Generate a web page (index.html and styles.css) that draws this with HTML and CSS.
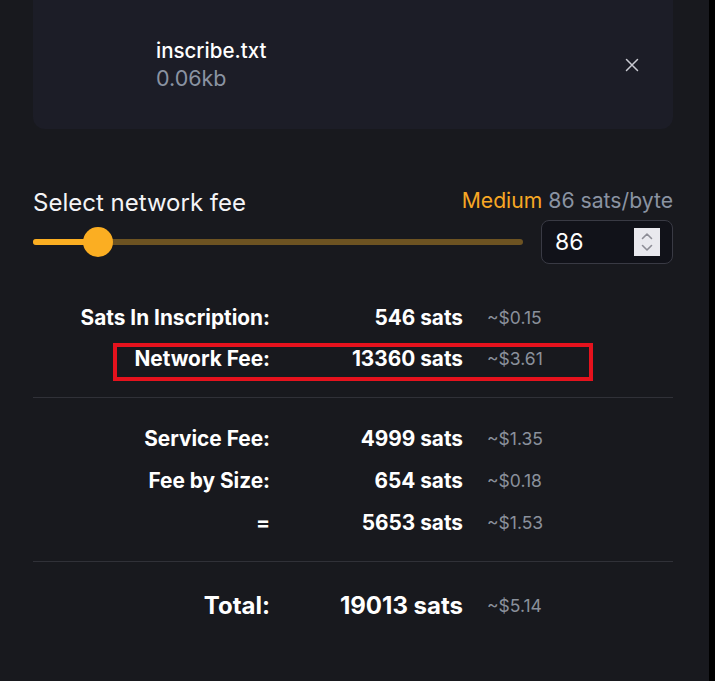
FILE: index.html
```html
<!DOCTYPE html>
<html lang="en">
<head>
<meta charset="utf-8">
<title>Inscribe</title>
<link rel="stylesheet" href="styles.css">
</head>
<body>
<div class="page">
  <main class="main">
    <section class="file-card">
      <div class="file-info">
        <div class="file-name">inscribe.txt</div>
        <div class="file-size">0.06kb</div>
      </div>
      <button class="close-btn" aria-label="Remove">
        <svg width="14" height="14" viewBox="0 0 14 14"><path d="M1.5 1.5 L12.5 12.5 M12.5 1.5 L1.5 12.5" stroke="#c9cad2" stroke-width="1.5" stroke-linecap="round" fill="none"/></svg>
      </button>
    </section>

    <section class="fee-select">
      <div class="fee-head">
        <span class="fee-title">Select network fee</span>
        <span class="fee-rate"><span class="fee-level">Medium</span> 86 sats/byte</span>
      </div>
      <div class="fee-controls">
        <div class="slider">
          <div class="slider-fill"></div>
          <div class="slider-thumb"></div>
        </div>
        <div class="num-input">
          <span class="num-value">86</span>
          <span class="spinner">
            <svg width="26" height="28" viewBox="0 0 26 28"><path d="M8.5 10.5 L13 6 L17.5 10.5" stroke="#8d8d96" stroke-width="1.6" fill="none" stroke-linecap="round" stroke-linejoin="round"/><path d="M8.5 17.5 L13 22 L17.5 17.5" stroke="#8d8d96" stroke-width="1.6" fill="none" stroke-linecap="round" stroke-linejoin="round"/></svg>
          </span>
        </div>
      </div>
    </section>

    <section class="summary">
      <div class="row">
        <span class="label">Sats In Inscription:</span>
        <span class="value">546 sats</span>
        <span class="usd">~$0.15</span>
      </div>
      <div class="row highlighted">
        <span class="label">Network Fee:</span>
        <span class="value">13360 sats</span>
        <span class="usd">~$3.61</span>
      </div>
    </section>

    <hr class="divider">

    <section class="summary group2">
      <div class="row">
        <span class="label">Service Fee:</span>
        <span class="value">4999 sats</span>
        <span class="usd">~$1.35</span>
      </div>
      <div class="row">
        <span class="label">Fee by Size:</span>
        <span class="value">654 sats</span>
        <span class="usd">~$0.18</span>
      </div>
      <div class="row">
        <span class="label">=</span>
        <span class="value">5653 sats</span>
        <span class="usd">~$1.53</span>
      </div>
    </section>

    <hr class="divider">

    <section class="summary total">
      <div class="row">
        <span class="label">Total:</span>
        <span class="value">19013 sats</span>
        <span class="usd">~$5.14</span>
      </div>
    </section>
  </main>
  <div class="edge"></div>
</div>
</body>
</html>
```

FILE: styles.css
```css
*, *::before, *::after { box-sizing: border-box; }

html, body {
  margin: 0;
  padding: 0;
  background: #18191e;
  height: 100%;
  overflow: hidden;
}

body {
  font-family: Inter, "Noto Sans", "Liberation Sans", sans-serif;
  color: #ffffff;
}

.page {
  display: flex;
  height: 681px;
}

.main {
  width: 709px;
  padding: 0 36px 0 33px;
  background: #18191e;
}

.edge {
  flex: 1;
  background: #000000;
}

/* File card */
.file-card {
  margin-top: -12px;
  height: 141px;
  background: #1c1d27;
  border-radius: 12px;
  display: flex;
  align-items: center;
  padding: 12px 34px 0 123px;
}

.file-info {
  flex: 1;
  display: flex;
  flex-direction: column;
}

.file-name {
  font-size: 20.5px;
  font-weight: 500;
  line-height: 27px;
  color: #ffffff;
}

.file-size {
  font-size: 21.5px;
  line-height: 28px;
  color: #8a93a2;
}

.close-btn {
  background: none;
  border: 0;
  padding: 0;
  width: 14px;
  height: 14px;
  display: flex;
}

/* Fee selector */
.fee-select {
  margin-top: 57px;
}

.fee-head {
  display: flex;
  justify-content: space-between;
  align-items: center;
  height: 32px;
}

.fee-title {
  font-size: 24px;
  color: #f4f4f6;
  margin-top: 1px;
}

.fee-rate {
  font-size: 21.2px;
  color: #8a93a2;
  margin-top: -4px;
}

.fee-level {
  color: #f7a724;
}

.fee-controls {
  margin-top: 2px;
  display: flex;
  align-items: center;
  gap: 18px;
}

.slider {
  flex: 1;
  height: 6px;
  border-radius: 3px;
  background: #6d5322;
  position: relative;
}

.slider-fill {
  width: 64px;
  height: 100%;
  border-radius: 3px;
  background: #fbae22;
}

.slider-thumb {
  position: absolute;
  left: 50px;
  top: -12px;
  width: 30px;
  height: 30px;
  border-radius: 50%;
  background: #fbae22;
}

.num-input {
  width: 132px;
  height: 44px;
  border: 1px solid #393a44;
  border-radius: 8px;
  background: #111219;
  display: flex;
  align-items: center;
  justify-content: space-between;
  padding: 0 12px 0 13px;
}

.num-value {
  font-size: 23px;
  color: #ffffff;
}

.spinner {
  display: flex;
  width: 26px;
  height: 28px;
  background: #e9e9ee;
}

/* Summary rows */
.summary {
  margin-top: 33px;
}

.row {
  display: grid;
  grid-template-columns: 237px 193px auto;
  align-items: center;
  height: 41px;
  font-size: 20.8px;
  font-weight: 700;
}

.label {
  text-align: right;
}

.value {
  text-align: right;
}

.usd {
  padding-left: 24px;
  font-size: 17.5px;
  font-weight: 400;
  color: #8a909b;
}

.highlighted {
  position: relative;
}

.highlighted::after {
  content: "";
  position: absolute;
  left: 80px;
  width: 480px;
  top: 5px;
  height: 38px;
  border: 4px solid #e5121d;
}

.divider {
  margin: 18px 0 0;
  border: 0;
  height: 1px;
  background: #303138;
}

.group2 {
  margin-top: 19px;
}

.group2 .row {
  height: 42px;
}

.total {
  margin-top: 21px;
}

.total .row {
  height: 44px;
  font-size: 24px;
}
```
